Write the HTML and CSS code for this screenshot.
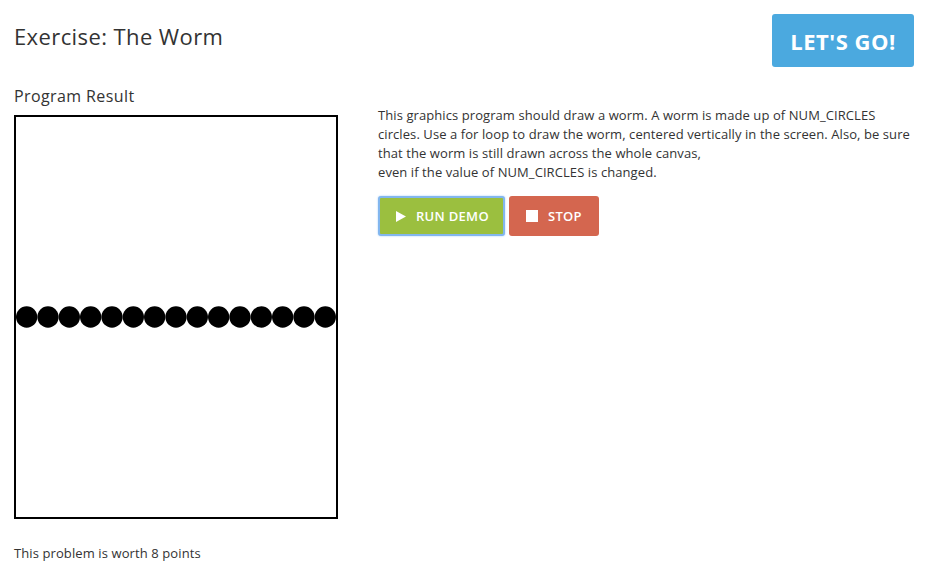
FILE: index.html
```html
<!DOCTYPE html>
<html>
<head>
<meta charset="utf-8">
<link rel="stylesheet" href="styles.css">
</head>
<body>
<div class="page">
  <header class="header">
    <h1 class="title">Exercise: The Worm</h1>
    <button class="go-btn">LET'S GO!</button>
  </header>
  <main class="content">
    <section class="left">
      <h2 class="result-label">Program Result</h2>
      <div class="canvas">
        <svg width="320" height="400" viewBox="0 0 320 400">
          <g fill="#000">
            <circle cx="10.667" cy="200" r="10.667"/>
            <circle cx="32" cy="200" r="10.667"/>
            <circle cx="53.333" cy="200" r="10.667"/>
            <circle cx="74.667" cy="200" r="10.667"/>
            <circle cx="96" cy="200" r="10.667"/>
            <circle cx="117.333" cy="200" r="10.667"/>
            <circle cx="138.667" cy="200" r="10.667"/>
            <circle cx="160" cy="200" r="10.667"/>
            <circle cx="181.333" cy="200" r="10.667"/>
            <circle cx="202.667" cy="200" r="10.667"/>
            <circle cx="224" cy="200" r="10.667"/>
            <circle cx="245.333" cy="200" r="10.667"/>
            <circle cx="266.667" cy="200" r="10.667"/>
            <circle cx="288" cy="200" r="10.667"/>
            <circle cx="309.333" cy="200" r="10.667"/>
          </g>
        </svg>
      </div>
      <p class="points">This problem is worth 8 points</p>
    </section>
    <section class="right">
      <p class="desc">This graphics program should draw a worm. A worm is made up of NUM_CIRCLES circles. Use a for loop to draw the worm, centered vertically in the screen. Also, be sure that the worm is still drawn across the whole canvas,<br>even if the value of NUM_CIRCLES is changed.</p>
      <div class="actions">
        <button class="btn btn-run">
          <svg class="ico" width="10" height="11" viewBox="0 0 10 11"><path d="M0 0 L10 5.5 L0 11 Z" fill="#fff"/></svg>
          <span>RUN DEMO</span>
        </button>
        <button class="btn btn-stop">
          <svg class="ico" width="12" height="12" viewBox="0 0 12 12"><rect width="12" height="12" fill="#fff"/></svg>
          <span>STOP</span>
        </button>
      </div>
    </section>
  </main>
</div>
</body>
</html>
```

FILE: styles.css
```css
* { box-sizing: border-box; }
html, body { margin: 0; padding: 0; background: #fff; }
body {
  font-family: "Open Sans", "Liberation Sans", sans-serif;
  color: #333;
}
.page { padding: 14px 15px 0 14px; }
.header {
  display: flex;
  justify-content: space-between;
  align-items: flex-start;
}
.title {
  margin: 8px 0 0 0;
  font-size: 22px;
  font-weight: 400;
  letter-spacing: 0.4px;
  line-height: 28px;
  color: #333;
}
.go-btn {
  width: 142px;
  height: 53px;
  border: none;
  border-radius: 3px;
  background: #4ba9df;
  color: #fff;
  font-family: inherit;
  font-size: 22px;
  font-weight: 700;
  letter-spacing: 0.5px;
  padding: 0;
}
.content {
  display: flex;
  gap: 40px;
  margin-top: 18px;
}
.left { width: 324px; flex: none; }
.result-label {
  margin: 0 0 8px 0;
  font-size: 16px;
  font-weight: 400;
  letter-spacing: 0.4px;
  line-height: 22px;
  color: #333;
}
.canvas {
  width: 324px;
  height: 404px;
  border: 2px solid #000;
}
.canvas svg { display: block; }
.points {
  margin: 25px 0 0 0;
  font-size: 13px;
  letter-spacing: 0.1px;
  line-height: 18px;
  color: #333;
}
.right { flex: 1; padding-top: 21px; }
.desc {
  margin: 0;
  font-size: 13px;
  letter-spacing: 0.08px;
  line-height: 19px;
  color: #333;
}
.actions {
  display: flex;
  gap: 4px;
  margin-top: 14px;
}
.btn {
  height: 40px;
  border: none;
  border-radius: 3px;
  color: #fff;
  font-family: inherit;
  font-size: 13px;
  font-weight: 600;
  letter-spacing: 0.3px;
  white-space: nowrap;
  display: flex;
  align-items: center;
  gap: 10px;
  padding: 0 0 0 17px;
}
.btn-run {
  width: 127px;
  background: #9bbf3f;
  border: 2px solid #82b6ee;
  box-shadow: 0 0 2px 0 #9cc8f5;
  padding-left: 16px;
}
.btn-stop {
  width: 90px;
  background: #d4664f;
}
.ico { display: block; flex: none; }
```
